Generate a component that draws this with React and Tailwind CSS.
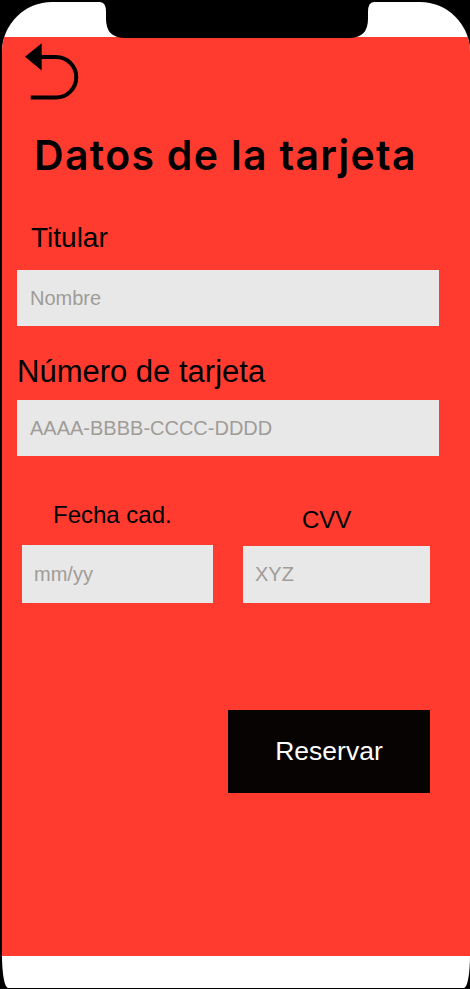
export default function App() {
  const arial = { fontFamily: '"Liberation Sans", Arial, sans-serif' };

  return (
    <div className="w-[470px] h-[989px] bg-black overflow-hidden pt-[2px] pl-[2px]">
      <div className="relative w-[468px] h-[986px] bg-white rounded-tl-[50px] rounded-tr-[50px] rounded-bl-[6px_32px] rounded-br-[6px_32px] flex flex-col overflow-hidden">
        {/* notch */}
        <svg className="absolute left-[98px] top-0" width="274" height="37" viewBox="0 0 274 37">
          <path d="M0 0 H274 Q268 0 268 10 V17 Q268 36 249 36 H25 Q6 36 6 17 V10 Q6 0 0 0 Z" fill="#000" />
        </svg>

        <div className="h-[35px] shrink-0" />

        <div className="h-[919px] bg-[#ff3b30] flex flex-col" style={arial}>
          <button className="mt-[3px] ml-[18px] w-[60px] h-[60px] block">
            <svg width="60" height="60" viewBox="0 0 60 60">
              <path d="M5 16.8 L21.7 3.3 L21.7 30.5 Z" fill="#000" />
              <path d="M20 17 H36 A20.25 20.25 0 0 1 36 57.5 H10.7" fill="none" stroke="#000" strokeWidth="4" />
            </svg>
          </button>

          <h1
            className="mt-[35px] ml-[32px] text-[41px] leading-none font-semibold tracking-[1.3px] text-black h-[41px] whitespace-nowrap"
            style={{ fontFamily: 'Inter, "Noto Sans", sans-serif' }}
          >
            Datos de la tarjeta
          </h1>

          <label className="mt-[48px] ml-[29px] text-[28px] leading-none h-[28px] text-black">Titular</label>
          <input
            placeholder="Nombre"
            className="mt-[18px] ml-[15px] w-[422px] h-[56px] bg-[#e8e8e8] pl-[13px] text-[20px] outline-none placeholder:text-[#a09c98]"
          />

          <label className="mt-[30px] ml-[15px] text-[31px] leading-none h-[31px] text-black">Número de tarjeta</label>
          <input
            placeholder="AAAA-BBBB-CCCC-DDDD"
            className="mt-[13px] ml-[15px] w-[422px] h-[56px] bg-[#e8e8e8] pl-[13px] text-[20px] outline-none placeholder:text-[#a09c98]"
          />

          <div className="flex ml-[20px]">
            <div className="flex flex-col w-[191px]">
              <span className="mt-[47px] pl-[31px] text-[24px] leading-none h-[24px] text-black">Fecha cad.</span>
              <input
                placeholder="mm/yy"
                className="mt-[18px] w-[191px] h-[58px] bg-[#e8e8e8] pl-[12px] text-[20px] outline-none placeholder:text-[#a09c98]"
              />
            </div>
            <div className="flex flex-col w-[187px] ml-[30px]">
              <span className="mt-[52px] pl-[59px] text-[24px] leading-none h-[24px] text-black">CVV</span>
              <input
                placeholder="XYZ"
                className="mt-[14px] w-[187px] h-[57px] bg-[#e8e8e8] pl-[12px] text-[20px] outline-none placeholder:text-[#a09c98]"
              />
            </div>
          </div>

          <button className="mt-[107px] ml-[226px] w-[202px] h-[83px] bg-[#070302] text-white text-[26.5px] flex items-center justify-center">
            Reservar
          </button>
        </div>
      </div>
    </div>
  );
}
